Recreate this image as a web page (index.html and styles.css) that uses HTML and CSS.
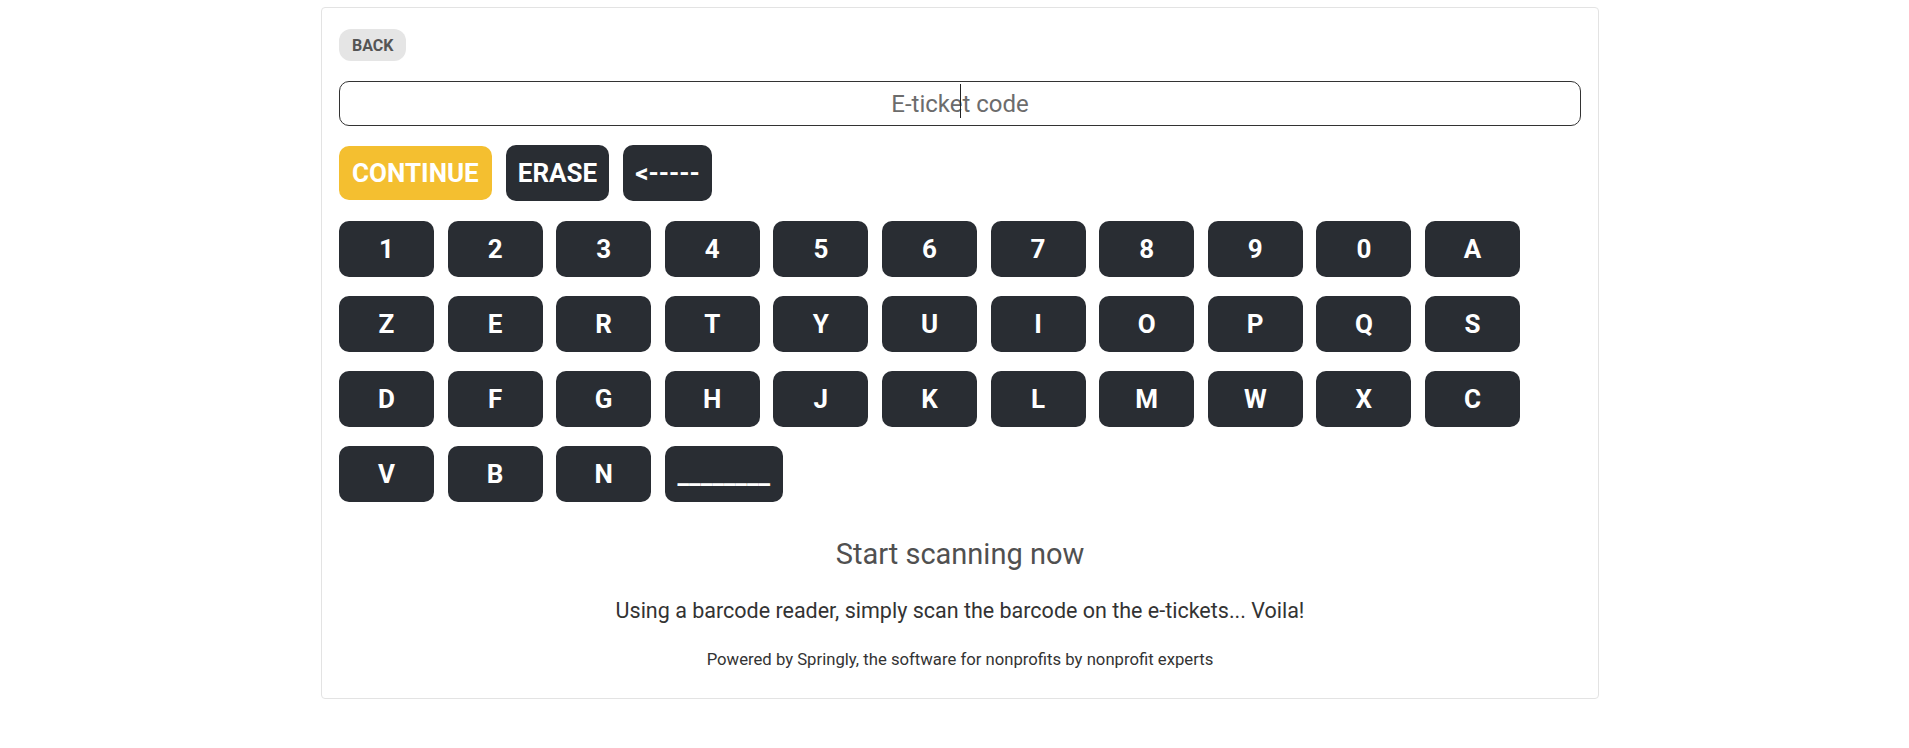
FILE: index.html
```html
<!DOCTYPE html>
<html>

<head>
  <title>E-ticket scanner</title>
  <meta charset="utf-8">
  <link rel="stylesheet" href="styles.css">
</head>

<body>
  <div class="card">
    <div class="top">
      <button class="back">BACK</button>
    </div>

    <div class="code-field">
      <input type="text" id="codeInput" placeholder="E-ticket code" />
      <span class="caret"></span>
    </div>

    <div class="actions">
      <button class="btn continue">CONTINUE</button>
      <button class="btn dark">ERASE</button>
      <button class="btn dark">&lt;-----</button>
    </div>

    <div class="keyboard">
      <button class="key">1</button>
      <button class="key">2</button>
      <button class="key">3</button>
      <button class="key">4</button>
      <button class="key">5</button>
      <button class="key">6</button>
      <button class="key">7</button>
      <button class="key">8</button>
      <button class="key">9</button>
      <button class="key">0</button>
      <button class="key">A</button>
      <button class="key">Z</button>
      <button class="key">E</button>
      <button class="key">R</button>
      <button class="key">T</button>
      <button class="key">Y</button>
      <button class="key">U</button>
      <button class="key">I</button>
      <button class="key">O</button>
      <button class="key">P</button>
      <button class="key">Q</button>
      <button class="key">S</button>
      <button class="key">D</button>
      <button class="key">F</button>
      <button class="key">G</button>
      <button class="key">H</button>
      <button class="key">J</button>
      <button class="key">K</button>
      <button class="key">L</button>
      <button class="key">M</button>
      <button class="key">W</button>
      <button class="key">X</button>
      <button class="key">C</button>
      <button class="key">V</button>
      <button class="key">B</button>
      <button class="key">N</button>
      <button class="key space">________</button>
    </div>

    <h3 class="title">Start scanning now</h3>
    <p class="lead">Using a barcode reader, simply scan the barcode on the e-tickets... Voila!</p>
    <p class="powered">Powered by Springly, the software for nonprofits by nonprofit experts</p>
  </div>
</body>

</html>
```

FILE: styles.css
```css
body {
  margin: 0;
  font-family: Roboto, "Liberation Sans", Arial, sans-serif;
  background-color: #fff;
  color: #333;
}

button {
  font-family: inherit;
  border: none;
  cursor: pointer;
}

.card {
  width: 1278px;
  box-sizing: border-box;
  margin: 7px 0 0 321px;
  padding: 21px 17px 26px 17px;
  border: 1px solid #e3e3e3;
  border-radius: 4px;
}

.top {
  display: flex;
  margin-bottom: 20px;
}

.back {
  height: 32px;
  padding: 0 13px;
  background-color: #e5e5e5;
  color: #555;
  font-size: 16px;
  font-weight: 700;
  border-radius: 12px;
}

.code-field {
  position: relative;
  margin-bottom: 19px;
}

.code-field input {
  display: block;
  width: 100%;
  height: 45px;
  box-sizing: border-box;
  border: 1px solid #333;
  border-radius: 10px;
  font-family: inherit;
  font-size: 24px;
  text-align: center;
  color: #333;
  outline: none;
}

.code-field input::placeholder {
  color: #6c6c6c;
}

.caret {
  position: absolute;
  left: 621px;
  top: 3px;
  width: 1px;
  height: 34px;
  background-color: #222;
}

.actions {
  display: flex;
  align-items: center;
  gap: 14px;
  margin-bottom: 20px;
}

.btn {
  height: 56px;
  padding: 0 12px;
  font-size: 26px;
  font-weight: 700;
  color: #fff;
  border-radius: 10px;
}

.continue {
  height: 54px;
  padding: 0 13px;
  background-color: #f4bf30;
}

.dark {
  background-color: #292d33;
}

.keyboard {
  display: flex;
  flex-wrap: wrap;
  gap: 19px 13.6px;
  width: 1181px;
}

.key {
  width: 95px;
  height: 56px;
  padding: 0;
  background-color: #292d33;
  color: #fff;
  font-size: 26px;
  font-weight: 700;
  border-radius: 10px;
}

.key.space {
  width: 118px;
}

.title {
  margin: 35px 0 0 0;
  font-size: 29px;
  line-height: 1.2;
  font-weight: 400;
  color: #505050;
  text-align: center;
}

.lead {
  margin: 23px 0 0 0;
  font-size: 21.5px;
  line-height: 1.5;
  color: #333;
  text-align: center;
}

.powered {
  margin: 20px 0 0 0;
  font-size: 16.7px;
  line-height: 1.5;
  color: #333;
  text-align: center;
}
```
